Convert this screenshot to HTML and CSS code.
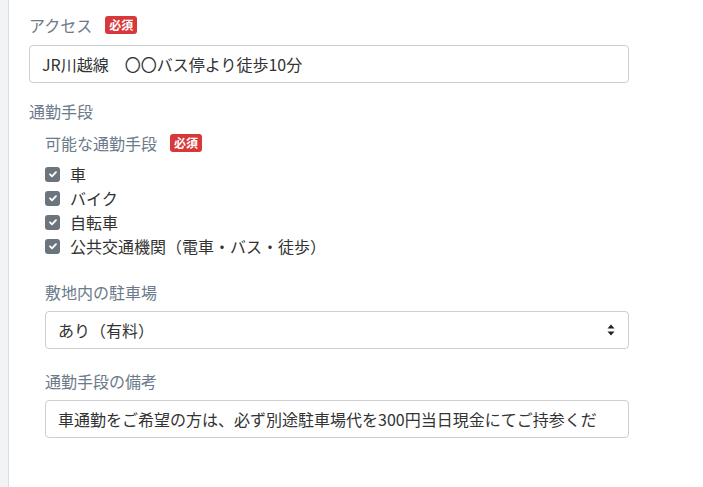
FILE: index.html
```html
<!DOCTYPE html>
<html lang="ja">
<head>
<meta charset="utf-8">
<link rel="stylesheet" href="styles.css">
</head>
<body>
<div class="layout">
  <aside class="rail"></aside>
  <main class="content">
    <div class="field">
      <div class="label">アクセス<span class="badge">必須</span></div>
      <div class="input">JR川越線　〇〇バス停より徒歩10分</div>
    </div>
    <div class="group">
      <div class="label">通勤手段</div>
      <div class="nested">
        <div class="field">
          <div class="label">可能な通勤手段<span class="badge">必須</span></div>
          <ul class="checks">
            <li><span class="box"><svg viewBox="0 0 14 14" width="14" height="14"><path d="M4 7.3l2 2 4-4.2" fill="none" stroke="#fff" stroke-width="1.8" stroke-linecap="round" stroke-linejoin="round"/></svg></span>車</li>
            <li><span class="box"><svg viewBox="0 0 14 14" width="14" height="14"><path d="M4 7.3l2 2 4-4.2" fill="none" stroke="#fff" stroke-width="1.8" stroke-linecap="round" stroke-linejoin="round"/></svg></span>バイク</li>
            <li><span class="box"><svg viewBox="0 0 14 14" width="14" height="14"><path d="M4 7.3l2 2 4-4.2" fill="none" stroke="#fff" stroke-width="1.8" stroke-linecap="round" stroke-linejoin="round"/></svg></span>自転車</li>
            <li><span class="box"><svg viewBox="0 0 14 14" width="14" height="14"><path d="M4 7.3l2 2 4-4.2" fill="none" stroke="#fff" stroke-width="1.8" stroke-linecap="round" stroke-linejoin="round"/></svg></span>公共交通機関（電車・バス・徒歩）</li>
          </ul>
        </div>
        <div class="field field-park">
          <div class="label">敷地内の駐車場</div>
          <div class="input select">あり（有料）<svg class="caret" viewBox="0 0 8 12" width="8" height="12"><path d="M4 0.5L7.5 4.5H0.5Z M4 11.5L7.5 7.5H0.5Z" fill="#222"/></svg></div>
        </div>
        <div class="field field-note">
          <div class="label">通勤手段の備考</div>
          <div class="input">車通勤をご希望の方は、必ず別途駐車場代を300円当日現金にてご持参くだ</div>
        </div>
      </div>
    </div>
  </main>
</div>
</body>
</html>
```
FILE: styles.css
```css
* { box-sizing: border-box; }
html, body { margin: 0; padding: 0; background: #fff; }
body {
  font-family: "Noto Sans CJK JP", "Noto Sans", sans-serif;
  font-size: 16px;
  color: #333;
}
.layout { display: flex; min-height: 487px; }
.rail {
  width: 9px;
  flex: none;
  background: #f2f3f5;
  border-right: 1px solid #dcdde0;
}
.content {
  padding: 13px 0 0 20px;
  width: 620px;
}
.field { display: flex; flex-direction: column; gap: 8px; }
.label {
  color: #6c7a8a;
  line-height: 24px;
  display: flex;
  align-items: center;
}
.badge {
  margin-left: 13px;
  background: #d8383a;
  color: #fff;
  font-size: 12px;
  font-weight: bold;
  line-height: 18px;
  padding: 0 4px;
  border-radius: 3px;
}
.input {
  height: 38px;
  border: 1px solid #ccced1;
  border-radius: 4px;
  padding: 0 12px;
  display: flex;
  align-items: center;
  white-space: nowrap;
  color: #333;
}
.select { justify-content: space-between; padding-right: 13px; }
.caret { flex: none; }
.group { margin-top: 16px; display: flex; flex-direction: column; gap: 8px; }
.nested { padding-left: 16px; display: flex; flex-direction: column; }
.nested .field { gap: 7px; }
.checks { list-style: none; margin: 0; padding: 0; }
.checks li {
  display: flex;
  align-items: center;
  gap: 10px;
  line-height: 24px;
  color: #333;
}
.box {
  width: 15px;
  height: 15px;
  flex: none;
  border-radius: 3px;
  background: #6c757d;
  display: flex;
  align-items: center;
  justify-content: center;
}
.field-park { margin-top: 22px; }
.field-note { margin-top: 20px; }
```
